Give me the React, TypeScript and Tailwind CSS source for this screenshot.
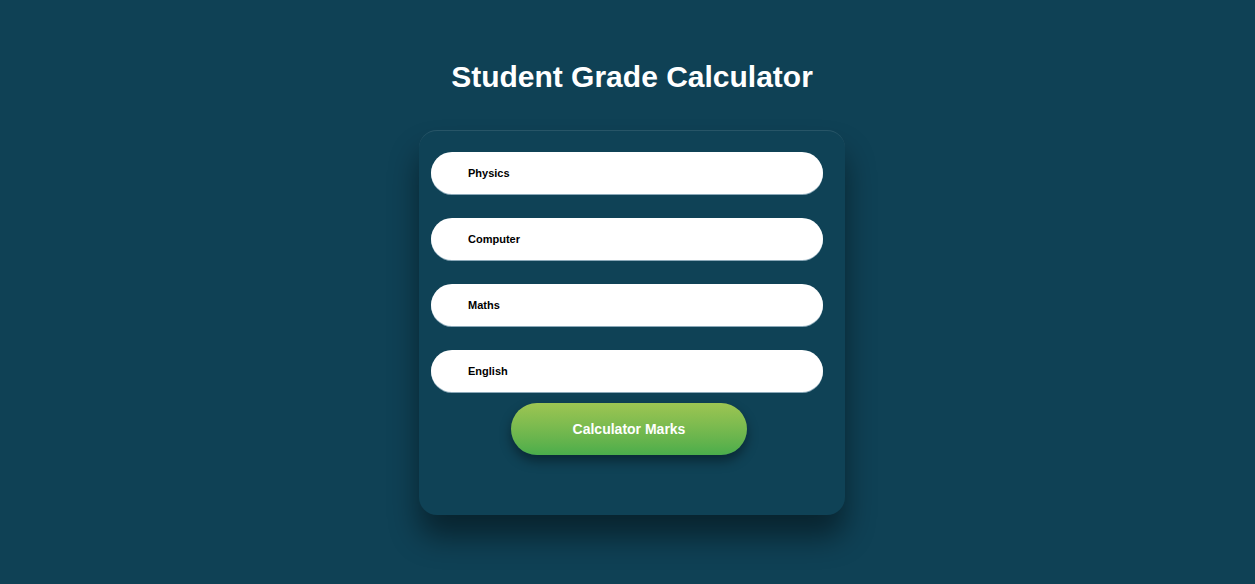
import React, { useState } from "react"

const subjects = ["Physics", "Computer", "Maths", "English"]

const App = () => {
  const [marks, setMarks] = useState<{ [key: string]: string }>({})

  return (
    <div className="min-h-screen w-full bg-[#0f4155] flex flex-col items-center pl-[9px] font-['Liberation_Sans',Arial,sans-serif]">
      <h1 className="mt-[58px] text-white font-bold text-[30px] leading-[38px]">Student Grade Calculator</h1>
      <div className="mt-[34px] w-[426px] h-[385px] rounded-[18px] bg-[#0f4256] border-t border-white/10 shadow-[0_22px_30px_rgba(0,0,0,0.45)] pt-[21px] pl-[12px]">
        <div className="flex flex-col gap-[24px] w-[392px]">
          {subjects.map((s) => (
            <input
              key={s}
              type="text"
              placeholder={s}
              value={marks[s] || ""}
              onChange={(e) => setMarks({ ...marks, [s]: e.target.value })}
              className="h-[42px] w-full rounded-[21px] bg-white pl-[37px] text-[11px] font-bold text-black placeholder:text-black outline-none shadow-[0_1px_0_#8aa8b8]"
            />
          ))}
        </div>
        <div className="w-[392px] flex justify-center mt-[11px]">
          <button
            type="button"
            className="ml-[4px] w-[236px] h-[52px] rounded-[26px] bg-gradient-to-b from-[#9dc552] to-[#4aad4b] text-white font-bold text-[14px] shadow-[0_6px_12px_rgba(0,0,0,0.4)]"
          >
            Calculator Marks
          </button>
        </div>
      </div>
    </div>
  )
}

export default App
